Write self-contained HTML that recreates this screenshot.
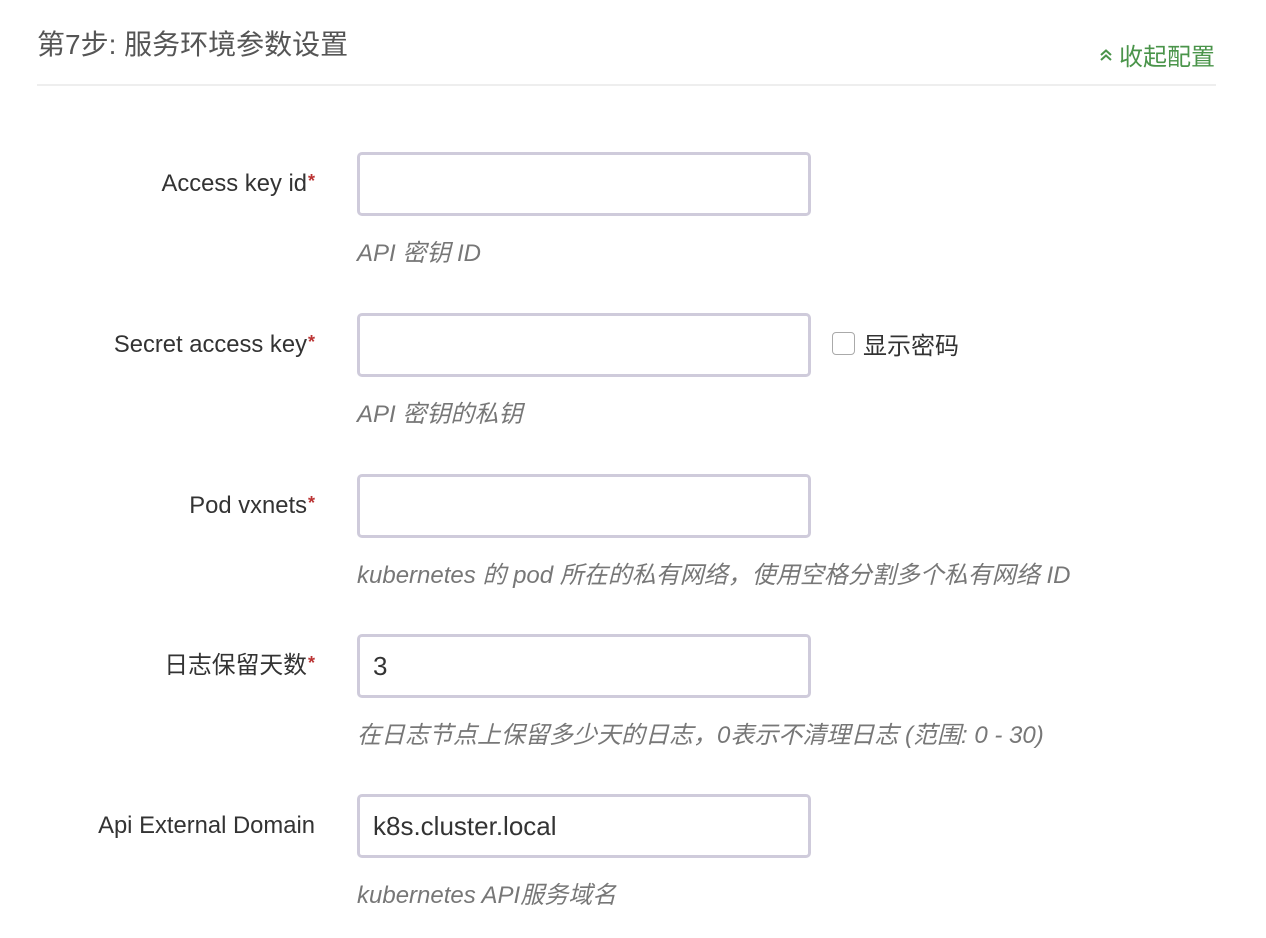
<!DOCTYPE html>
<html><head><meta charset="utf-8"><style>
body{margin:0;width:1266px;height:938px;background:#fff;font-family:"Liberation Sans","Noto Sans CJK SC",sans-serif;position:relative;overflow:hidden}
.t{position:absolute;left:37px;top:23px;font-size:28px;color:#555}
.c{position:absolute;right:51px;top:37px;font-size:24px;color:#4a944a}
.c svg{position:relative;top:-3px;margin-right:6px}
.hr{position:absolute;left:37px;width:1179px;top:84px;height:2px;background:#eee}
.l{position:absolute;right:951px;font-size:23.8px;color:#333;line-height:64px;height:64px}
.l b{color:#b33;font-weight:bold;font-size:18px;position:relative;top:-4px;margin-left:1px}
.i{position:absolute;left:357px;height:58px;border:3px solid #cfcbdb;border-radius:5px;font-size:26px;color:#333;line-height:58px;padding-left:13px;box-sizing:content-box;width:435px}
.h{position:absolute;left:357px;font-size:24px;color:#777;font-style:italic}
.cb{position:absolute;left:832px;top:332px;width:21px;height:21px;border:1px solid #aaa;border-radius:4px}
.ct{position:absolute;left:863px;top:326px;font-size:24px;color:#333}
</style></head><body>
<div class="t">第7步: 服务环境参数设置</div>
<div class="c"><svg width="14" height="14" viewBox="0 0 14 14"><path d="M2 7L7 2.5L12 7M2 12L7 7.5L12 12" fill="none" stroke="#4a944a" stroke-width="2"/></svg>收起配置</div>
<div class="hr"></div>

<div class="l" style="top:152px">Access key id<b>*</b></div>
<div class="i" style="top:152px"></div>
<div class="h" style="top:233px">API 密钥 ID</div>

<div class="l" style="top:313px">Secret access key<b>*</b></div>
<div class="i" style="top:313px"></div>
<div class="cb"></div><div class="ct">显示密码</div>
<div class="h" style="top:394px">API 密钥的私钥</div>

<div class="l" style="top:474px">Pod vxnets<b>*</b></div>
<div class="i" style="top:474px"></div>
<div class="h" style="top:555px">kubernetes 的 pod 所在的私有网络，使用空格分割多个私有网络 ID</div>

<div class="l" style="top:634px">日志保留天数<b>*</b></div>
<div class="i" style="top:634px">3</div>
<div class="h" style="top:715px">在日志节点上保留多少天的日志，0表示不清理日志 (范围: 0 - 30)</div>

<div class="l" style="top:794px">Api External Domain</div>
<div class="i" style="top:794px">k8s.cluster.local</div>
<div class="h" style="top:875px">kubernetes API服务域名</div>
</body></html>
